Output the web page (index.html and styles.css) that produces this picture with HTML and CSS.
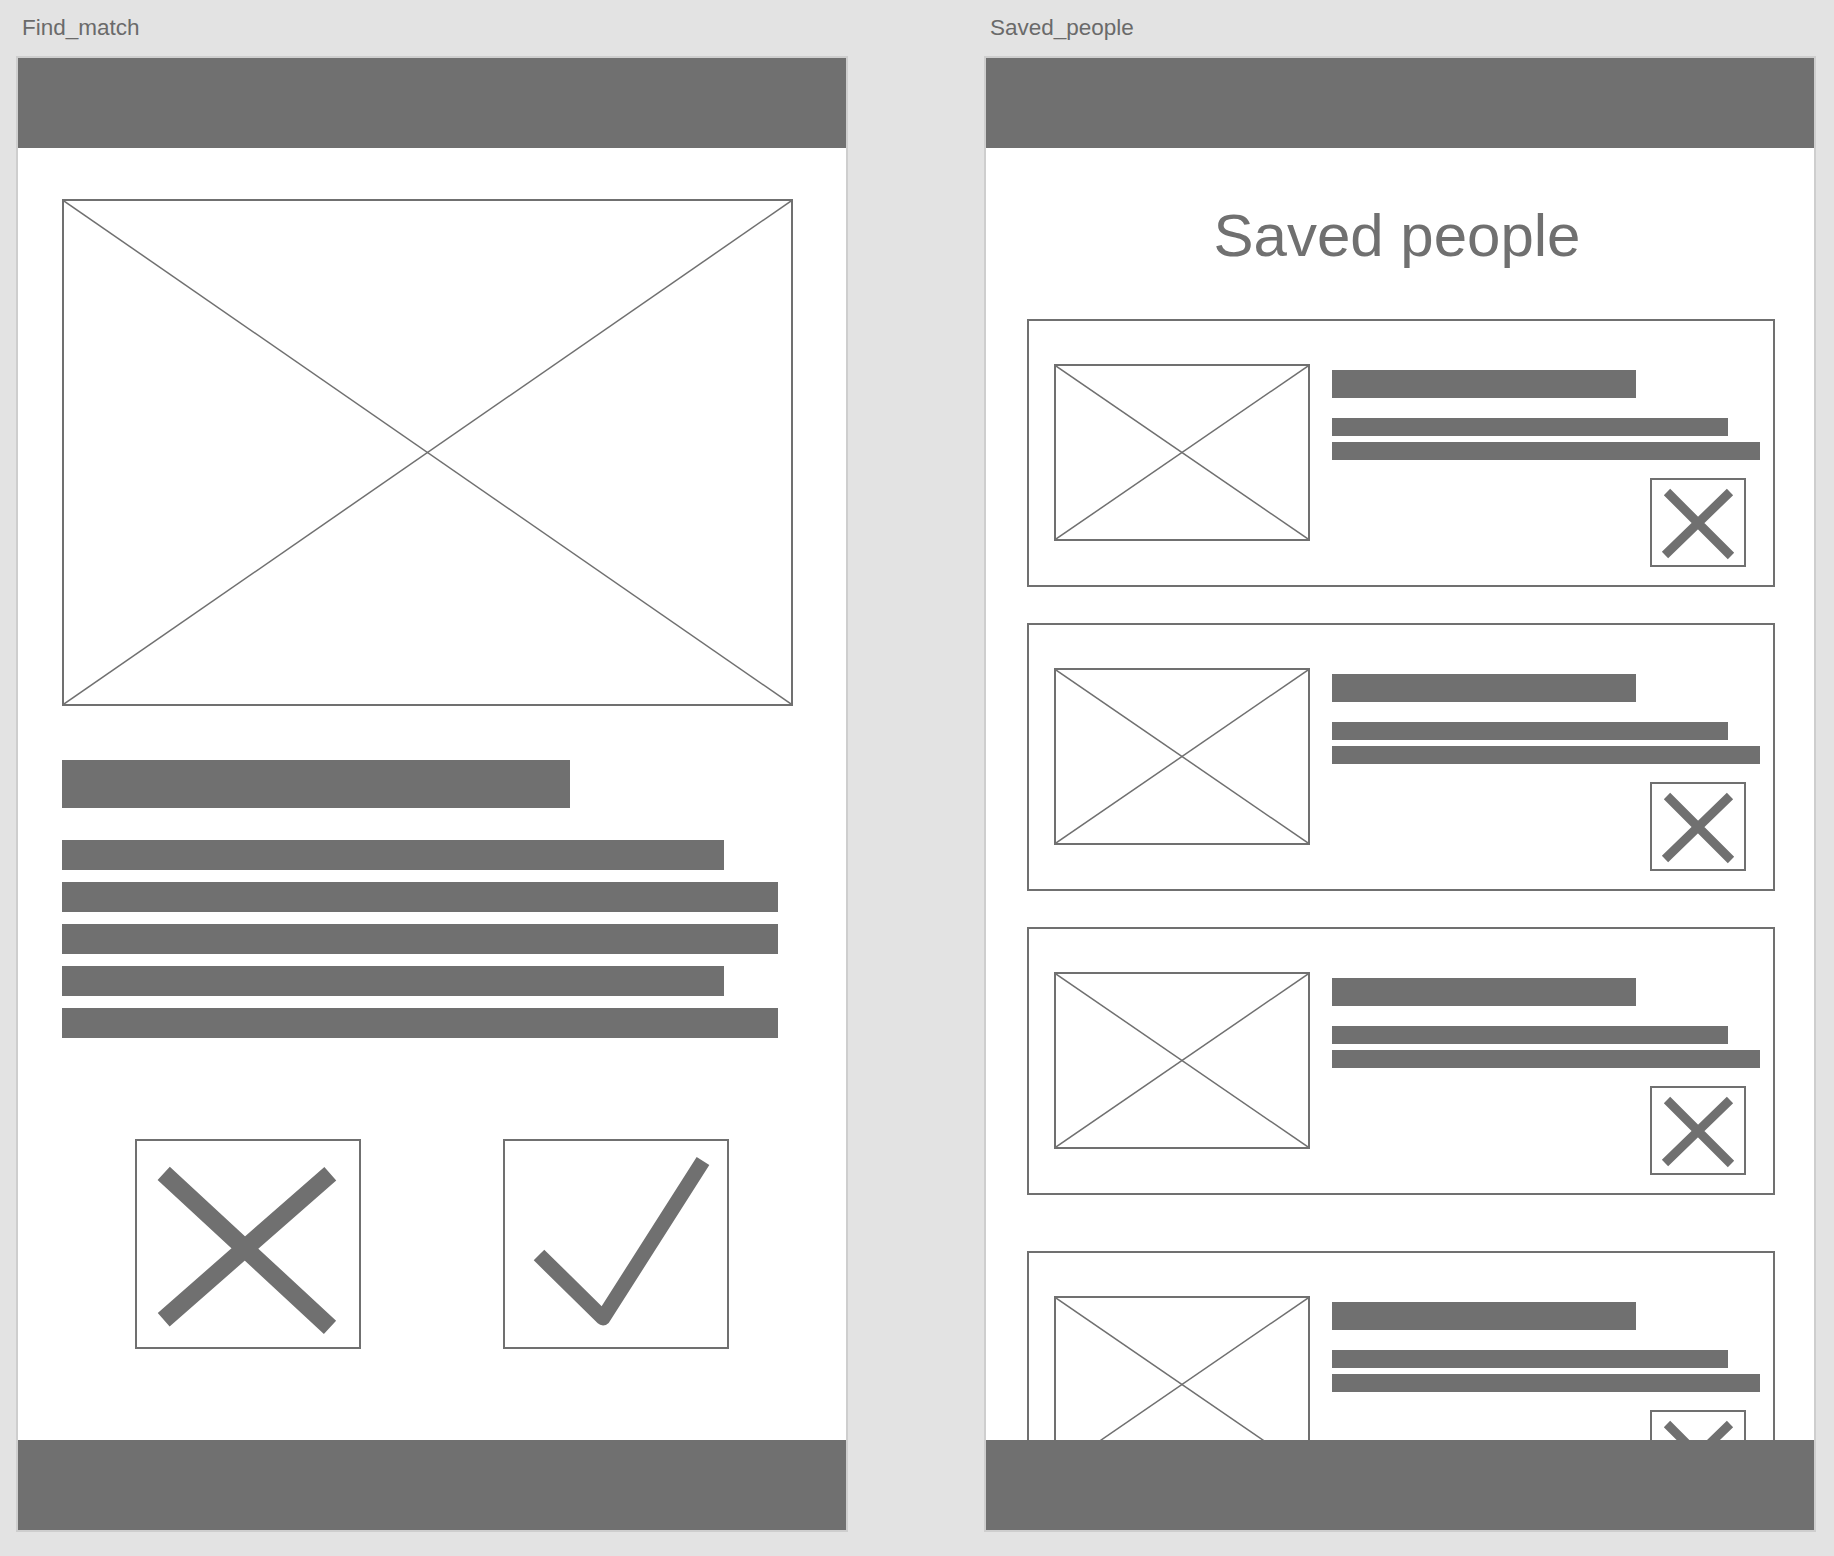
FILE: index.html
```html
<!DOCTYPE html>
<html>
<head>
    <meta charset="UTF-8">
    <title>Wireframes</title>
    <link rel="stylesheet" href="styles.css">
</head>

<body>

    <div class="canvas">

        <section class="board">
            <div class="board-name">Find_match</div>
            <div class="screen">
                <div class="topbar"></div>
                <div class="screen-body match">
                    <div class="ph photo">
                        <svg viewBox="0 0 100 100" preserveAspectRatio="none"><line x1="0" y1="0" x2="100" y2="100"/><line x1="100" y1="0" x2="0" y2="100"/></svg>
                    </div>
                    <div class="bar title-bar"></div>
                    <div class="lines">
                        <div class="bar line short"></div>
                        <div class="bar line"></div>
                        <div class="bar line"></div>
                        <div class="bar line short"></div>
                        <div class="bar line"></div>
                    </div>
                    <div class="actions">
                        <div class="action">
                            <svg class="icon" viewBox="0 0 222 206"><path d="M26.7 32.3 L193 186.3 M193.3 32.7 L26.7 178.7" stroke-width="18"/></svg>
                        </div>
                        <div class="action">
                            <svg class="icon" viewBox="0 0 222 206"><path d="M34 114 L98 177 L198 20" stroke-width="15" stroke-linejoin="round"/></svg>
                        </div>
                    </div>
                </div>
                <div class="bottombar"></div>
            </div>
        </section>

        <section class="board">
            <div class="board-name">Saved_people</div>
            <div class="screen">
                <div class="topbar"></div>
                <div class="screen-body">
                    <h1 class="page-title">Saved people</h1>
                    <div class="people">
                        <div class="person">
                            <div class="ph thumb">
                                <svg viewBox="0 0 100 100" preserveAspectRatio="none"><line x1="0" y1="0" x2="100" y2="100"/><line x1="100" y1="0" x2="0" y2="100"/></svg>
                            </div>
                            <div class="person-info">
                                <div class="bar name"></div>
                                <div class="bar detail"></div>
                                <div class="bar detail long"></div>
                                <div class="remove">
                                    <svg class="icon" viewBox="0 0 92 85"><path d="M15 12 L79 76 M78 12 L13 75" stroke-width="9"/></svg>
                                </div>
                            </div>
                        </div>
                        <div class="person">
                            <div class="ph thumb">
                                <svg viewBox="0 0 100 100" preserveAspectRatio="none"><line x1="0" y1="0" x2="100" y2="100"/><line x1="100" y1="0" x2="0" y2="100"/></svg>
                            </div>
                            <div class="person-info">
                                <div class="bar name"></div>
                                <div class="bar detail"></div>
                                <div class="bar detail long"></div>
                                <div class="remove">
                                    <svg class="icon" viewBox="0 0 92 85"><path d="M15 12 L79 76 M78 12 L13 75" stroke-width="9"/></svg>
                                </div>
                            </div>
                        </div>
                        <div class="person">
                            <div class="ph thumb">
                                <svg viewBox="0 0 100 100" preserveAspectRatio="none"><line x1="0" y1="0" x2="100" y2="100"/><line x1="100" y1="0" x2="0" y2="100"/></svg>
                            </div>
                            <div class="person-info">
                                <div class="bar name"></div>
                                <div class="bar detail"></div>
                                <div class="bar detail long"></div>
                                <div class="remove">
                                    <svg class="icon" viewBox="0 0 92 85"><path d="M15 12 L79 76 M78 12 L13 75" stroke-width="9"/></svg>
                                </div>
                            </div>
                        </div>
                        <div class="person">
                            <div class="ph thumb">
                                <svg viewBox="0 0 100 100" preserveAspectRatio="none"><line x1="0" y1="0" x2="100" y2="100"/><line x1="100" y1="0" x2="0" y2="100"/></svg>
                            </div>
                            <div class="person-info">
                                <div class="bar name"></div>
                                <div class="bar detail"></div>
                                <div class="bar detail long"></div>
                                <div class="remove">
                                    <svg class="icon" viewBox="0 0 92 85"><path d="M15 12 L79 76 M78 12 L13 75" stroke-width="9"/></svg>
                                </div>
                            </div>
                        </div>
                    </div>
                </div>
                <div class="bottombar"></div>
            </div>
        </section>

    </div>

</body>

</html>
```

FILE: styles.css
```css
* {
    box-sizing: border-box;
    margin: 0;
    padding: 0;
}

body {
    background: #e3e3e3;
    font-family: "Liberation Sans", Arial, sans-serif;
}

.canvas {
    display: flex;
    gap: 136px;
    padding: 15px 0 0 16px;
}

.board-name {
    font-size: 22.5px;
    line-height: 26px;
    color: #6a6a6a;
    padding-left: 6px;
    margin-bottom: 15px;
}

.screen {
    width: 832px;
    height: 1476px;
    border: 2px solid #cecece;
    background: #fff;
    display: flex;
    flex-direction: column;
}

.topbar,
.bottombar {
    height: 90px;
    flex: none;
    background: #707070;
}

.screen-body {
    flex: 1;
    min-height: 0;
    overflow: hidden;
}

/* image placeholders */
.ph {
    border: 2px solid #707070;
    flex: none;
}

.ph svg {
    display: block;
    width: 100%;
    height: 100%;
}

.ph line {
    stroke: #707070;
    stroke-width: 1.5;
    vector-effect: non-scaling-stroke;
}

.bar {
    background: #707070;
}

.icon {
    display: block;
    width: 100%;
    height: 100%;
}

.icon path {
    fill: none;
    stroke: #707070;
}

/* Find_match */
.match {
    padding: 51px 0 0 44px;
}

.photo {
    width: 731px;
    height: 507px;
}

.title-bar {
    width: 508px;
    height: 48px;
    margin-top: 54px;
}

.lines {
    display: flex;
    flex-direction: column;
    gap: 12px;
    margin-top: 32px;
}

.line {
    width: 716px;
    height: 30px;
}

.line.short {
    width: 662px;
}

.actions {
    display: flex;
    gap: 142px;
    margin: 101px 0 0 73px;
}

.action {
    width: 226px;
    height: 210px;
    border: 2px solid #707070;
}

/* Saved_people */
.page-title {
    font-size: 60px;
    line-height: 69px;
    font-weight: normal;
    color: #707070;
    text-align: center;
    padding-right: 6px;
    margin-top: 53px;
}

.people {
    display: flex;
    flex-direction: column;
    gap: 36px;
    margin: 49px 0 0 41px;
}

.person {
    flex: none;
    width: 748px;
    height: 268px;
    border: 2px solid #707070;
    display: flex;
    align-items: flex-start;
    padding: 43px 0 0 25px;
}

.person:last-child {
    margin-top: 20px;
}

.thumb {
    width: 256px;
    height: 177px;
}

.person-info {
    width: 428px;
    margin-left: 22px;
    display: flex;
    flex-direction: column;
    align-items: flex-start;
}

.name {
    width: 304px;
    height: 28px;
    margin-top: 6px;
}

.detail {
    width: 396px;
    height: 18px;
    margin-top: 20px;
}

.detail.long {
    width: 428px;
    margin-top: 6px;
}

.remove {
    width: 96px;
    height: 89px;
    border: 2px solid #707070;
    align-self: flex-end;
    margin: 18px 14px 0 0;
}
```
